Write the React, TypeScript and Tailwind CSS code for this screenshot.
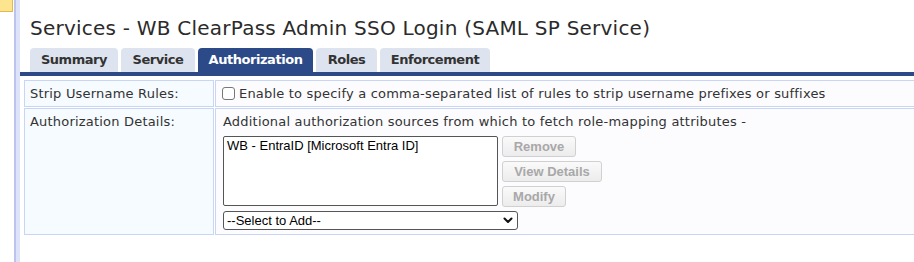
import React from 'react';

const tabs = [
  { label: 'Summary', width: 'w-[88px]' },
  { label: 'Service', width: 'w-[74px]' },
  { label: 'Authorization', width: 'w-[115px]', active: true },
  { label: 'Roles', width: 'w-[61px]' },
  { label: 'Enforcement', width: 'w-[110px]' },
];

const verdana = "font-['DejaVu_Sans',Verdana,sans-serif]";
const arial = "font-['Liberation_Sans',Arial,sans-serif]";

const DisabledButton: React.FC<{ label: string; width: string }> = ({ label, width }) => (
  <button
    disabled
    className={`${arial} ${width} h-[21px] rounded-[3px] border border-[#d0d0d0] bg-gradient-to-b from-[#fafafa] to-[#ececec] text-[13px] font-bold tracking-normal text-[#a8a8a8] leading-none`}
  >
    {label}
  </button>
);

const App: React.FC = () => {
  return (
    <div className={`flex h-[262px] w-[914px] overflow-hidden bg-white ${verdana}`}>
      {/* left gutter */}
      <div className="w-[14px] shrink-0">
        <div className="h-[12px] w-[13px] border-b border-r border-[#e5b84a] bg-[#fde48e]" />
      </div>
      <div className="w-[6px] shrink-0 border-l-2 border-[#bcc4ee] bg-[#dde3f8]" />

      <div className="min-w-0 flex-1">
        <h1 className="h-[48px] pl-[10px] pt-[16px] text-[20px] leading-[24px] font-normal tracking-[0.23px] text-[#2b2b2b]">
          Services - WB ClearPass Admin SSO Login (SAML SP Service)
        </h1>

        <div className="flex h-[24px] gap-[3px] pl-[10px]">
          {tabs.map((tab) => (
            <div
              key={tab.label}
              className={`${tab.width} flex items-center justify-center rounded-t-[4px] text-[13px] font-bold tracking-[-0.45px] ${
                tab.active ? 'bg-[#2c4a87] text-white' : 'bg-[#dde4ef] text-[#333]'
              }`}
            >
              {tab.label}
            </div>
          ))}
        </div>
        <div className="h-[4px] bg-[#2d4a87]" />

        <table className="ml-[3px] mt-[3px] w-[920px] table-fixed border-separate border-spacing-[1px] text-[13px] tracking-[0.2px] text-[#333]">
          <colgroup>
            <col className="w-[190px]" />
            <col />
          </colgroup>
          <tbody>
            <tr>
              <td className="h-[27px] border border-[#c8d5f5] bg-[#f5fbff] pl-[5px] align-middle">
                Strip Username Rules:
              </td>
              <td className="h-[27px] border border-[#c8d5f5] bg-[#fcfcff] pl-[6px] align-middle">
                <div className="flex items-center gap-[4px]">
                  <span className="inline-block h-[13px] w-[13px] rounded-[3px] border border-[#777] bg-white" />
                  <span>Enable to specify a comma-separated list of rules to strip username prefixes or suffixes</span>
                </div>
              </td>
            </tr>
            <tr>
              <td className="h-[127px] border border-[#c8d5f5] bg-[#f5fbff] pl-[5px] pt-[5px] align-top leading-[16px]">
                Authorization Details:
              </td>
              <td className="h-[127px] border border-[#c8d5f5] bg-[#fcfcff] pl-[7px] pt-[5px] align-top leading-[16px]">
                <div>Additional authorization sources from which to fetch role-mapping attributes -</div>
                <div className="mt-[6px] flex gap-[4px]">
                  <div className={`${arial} h-[70px] w-[275px] rounded-[2px] border border-[#555] bg-white px-[3px] pt-[1px] text-[13px] leading-[15px] tracking-normal text-black`}>
                    WB - EntraID [Microsoft Entra ID]
                  </div>
                  <div className="flex flex-col items-start gap-[4px]">
                    <DisabledButton label="Remove" width="w-[74px]" />
                    <DisabledButton label="View Details" width="w-[100px]" />
                    <DisabledButton label="Modify" width="w-[64px]" />
                  </div>
                </div>
                <div
                  className={`${arial} mt-[4px] flex h-[19px] w-[295px] items-center justify-between rounded-[3px] border border-[#555] bg-white pl-[3px] pr-[4px] text-[13px] tracking-normal text-black`}
                >
                  <span>--Select to Add--</span>
                  <svg width="10" height="7" viewBox="0 0 10 7" fill="none">
                    <path d="M1.5 1.5 L5 5 L8.5 1.5" stroke="#111" strokeWidth="2" strokeLinecap="round" strokeLinejoin="round" />
                  </svg>
                </div>
              </td>
            </tr>
          </tbody>
        </table>
      </div>
    </div>
  );
};

export default App;
